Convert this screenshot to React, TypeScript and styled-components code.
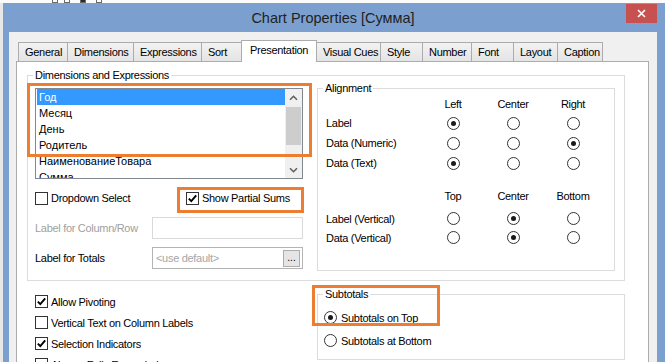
import styled, { createGlobalStyle, css } from 'styled-components';

const ORANGE = '#ed7d31';

const GlobalStyle = createGlobalStyle`
  html, body { margin: 0; padding: 0; }
  body {
    background: #e8e8e8;
    font-family: 'Liberation Sans', Arial, sans-serif;
    font-size: 11px;
    color: #000;
  }
  * { box-sizing: border-box; }
`;

const Screen = styled.div`
  width: 665px;
  height: 362px;
  overflow: hidden;
  position: relative;
  display: flex;
  flex-direction: column;
  background: #e8e8e8;
`;

const DesktopStrip = styled.div`
  height: 3px;
  flex: none;
  display: flex;
  background: #fbfbfb;
`;

const DesktopIcon = styled.span<{ $ml: number; $dark?: boolean }>`
  margin-left: ${p => p.$ml}px;
  width: 6px;
  height: 3px;
  border: 1px solid #6a6a6a;
  border-top: none;
  background: ${p => (p.$dark ? '#2a2a2a' : 'transparent')};
`;

const Window = styled.div`
  margin-left: 3px;
  width: 662px;
  flex: 1;
  display: flex;
  flex-direction: column;
  background: #7ba0cf;
  padding: 0 8px 0 6px;
`;

const TitleBar = styled.div`
  height: 29px;
  flex: none;
  display: grid;
  grid-template-columns: 1fr auto 1fr;
  align-items: center;
`;

const Title = styled.div`
  grid-column: 2;
  font-size: 14.5px;
  color: #1f1f1f;
  white-space: nowrap;
`;

const CloseButton = styled.div`
  grid-column: 3;
  justify-self: end;
  align-self: start;
  margin-top: 1px;
  width: 31px;
  height: 19px;
  background: #c75050;
  display: flex;
  align-items: center;
  justify-content: center;
`;

const Client = styled.div`
  flex: 1;
  display: flex;
  flex-direction: column;
  background: #f0f0f0;
  padding: 8px 8px 0 7px;
  letter-spacing: -0.3px;
`;

const TabStrip = styled.div`
  height: 21px;
  flex: none;
  display: flex;
  align-items: flex-end;
  padding-left: 2px;
`;

const Tab = styled.div<{ $w: number; $active?: boolean }>`
  width: ${p => p.$w}px;
  height: 19px;
  margin-left: -1px;
  border: 1px solid #acacac;
  border-bottom: none;
  background: linear-gradient(#f2f2f2, #e4e4e4);
  padding-left: 6px;
  line-height: 18px;
  white-space: nowrap;
  &:first-child { margin-left: 0; }
  ${p =>
    p.$active &&
    css`
      height: 22px;
      margin-bottom: -1px;
      background: #fff;
      position: relative;
      z-index: 1;
      padding-left: 8px;
      line-height: 19px;
    `}
`;

const Page = styled.div`
  flex: 1;
  background: #fff;
  border: 1px solid #acacac;
  padding: 6px 0 0 10px;
`;

const Group = styled.fieldset`
  margin: 0;
  min-width: 0;
  border: 1px solid #dcdcdc;
  padding: 0 0 0 7px;
`;

const Legend = styled.legend`
  padding: 0 2px;
  margin-left: -2px;
  line-height: 14px;
`;

const DimGroup = styled(Group)`
  width: 598px;
  padding: 0 9px 9px 7px;
`;

const DimBody = styled.div`
  display: grid;
  grid-template-columns: 268px 298px;
  column-gap: 14px;
  align-items: start;
`;

const LeftCol = styled.div`
  display: flex;
  flex-direction: column;
  padding-top: 6px;
`;

const ListBox = styled.div`
  height: 91px;
  border: 1px solid #828790;
  display: grid;
  grid-template-columns: 1fr 17px;
  overflow: hidden;
  letter-spacing: 0;
`;

const ListItems = styled.div`
  padding-left: 1px;
  overflow: hidden;
`;

const ListItem = styled.div<{ $selected?: boolean }>`
  height: 16px;
  line-height: 16px;
  padding-left: 2px;
  white-space: nowrap;
  background: ${p => (p.$selected ? '#3399ff' : 'transparent')};
  color: ${p => (p.$selected ? '#fff' : '#000')};
`;

const ScrollBar = styled.div`
  display: flex;
  flex-direction: column;
  background: #f0f0f0;
`;

const ScrollButton = styled.div`
  height: 17px;
  flex: none;
  display: flex;
  align-items: center;
  justify-content: center;
`;

const ScrollThumb = styled.div`
  height: 38px;
  margin: 1px 1px 0;
  background: #cdcdcd;
`;

const ScrollTrack = styled.div`
  flex: 1;
`;

const CheckRow = styled.div`
  margin-top: 11px;
  height: 16px;
  display: grid;
  grid-template-columns: 151px 1fr;
  align-items: center;
`;

const CheckLabel = styled.label`
  display: flex;
  align-items: center;
  gap: 3px;
  white-space: nowrap;
`;

const CheckBox = styled.span`
  width: 13px;
  height: 13px;
  flex: none;
  border: 1px solid #333;
  background: #fff;
  display: flex;
  align-items: center;
  justify-content: center;
`;

const FieldGrid = styled.div`
  margin-top: 11px;
  display: grid;
  grid-template-columns: 117px 151px;
  grid-auto-rows: 22px;
  row-gap: 8px;
  align-items: center;
`;

const FieldLabel = styled.span<{ $disabled?: boolean }>`
  color: ${p => (p.$disabled ? '#a0a0a0' : '#000')};
  white-space: nowrap;
`;

const TextBox = styled.div<{ $muted?: boolean }>`
  height: 22px;
  border: 1px solid ${p => (p.$muted ? '#d9d9d9' : '#b4b4b4')};
  background: #fff;
  display: flex;
  align-items: center;
  padding: 0 2px 0 3px;
  color: #a6a6a6;
  white-space: nowrap;
`;

const DotsButton = styled.div`
  margin-left: auto;
  width: 17px;
  height: 17px;
  border: 1px solid #acacac;
  background: #e5e5e5;
  color: #000;
  font-size: 10px;
  line-height: 13px;
  text-align: center;
  letter-spacing: 0;
`;

const AlignGroup = styled(Group)`
  margin-top: -1px;
  padding-bottom: 23px;
`;

const AlignBlock = styled.div<{ $head: number; $rows: number; $rh: number; $mt?: number }>`
  margin: ${p => p.$mt ?? 0}px 0 0 1px;
  display: grid;
  grid-template-columns: 97px repeat(3, 60px);
  grid-template-rows: ${p => p.$head}px repeat(${p => p.$rows}, ${p => p.$rh}px);
  align-items: center;
`;

const ColHead = styled.span`
  justify-self: center;
  align-self: start;
  line-height: 18px;
`;

const RowLabel = styled.span`
  white-space: nowrap;
`;

const Radio = styled.span<{ $on?: boolean }>`
  width: 13px;
  height: 13px;
  flex: none;
  border-radius: 50%;
  border: 1px solid #333;
  background: #fff;
  display: inline-flex;
  align-items: center;
  justify-content: center;
  justify-self: center;
  &::after {
    content: '';
    width: 5px;
    height: 5px;
    border-radius: 50%;
    background: #1a1a1a;
    display: ${p => (p.$on ? 'block' : 'none')};
  }
`;

const Lower = styled.div`
  display: grid;
  grid-template-columns: 290px 308px;
  align-items: start;
`;

const OptionList = styled.div`
  padding: 10px 0 0 8px;
  display: flex;
  flex-direction: column;
`;

const OptionRow = styled(CheckLabel)`
  height: 21px;
`;

const SubGroup = styled(Group)`
  margin-top: 6px;
  padding: 5px 0 7px 7px;
`;

const RadioRow = styled.label`
  height: 23px;
  margin-left: -1px;
  display: flex;
  align-items: center;
  gap: 4px;
  white-space: nowrap;
`;

const Highlight = styled.div<{ $x: number; $y: number; $w: number; $h: number }>`
  position: absolute;
  left: ${p => p.$x}px;
  top: ${p => p.$y}px;
  width: ${p => p.$w}px;
  height: ${p => p.$h}px;
  border: 3px solid ${ORANGE};
  pointer-events: none;
`;

const tabs: [string, number][] = [
  ['General', 50],
  ['Dimensions', 67],
  ['Expressions', 69],
  ['Sort', 41],
  ['Presentation', 76],
  ['Visual Cues', 65],
  ['Style', 43],
  ['Number', 50],
  ['Font', 43],
  ['Layout', 45],
  ['Caption', 46],
];

const listItems = ['Год', 'Месяц', 'День', 'Родитель', 'НаименованиеТовара', 'Сумма'];

const horizontal: [string, number][] = [
  ['Label', 0],
  ['Data (Numeric)', 2],
  ['Data (Text)', 0],
];

const vertical: [string, number][] = [
  ['Label (Vertical)', 1],
  ['Data (Vertical)', 1],
];

function Check({ on }: { on?: boolean }) {
  return (
    <CheckBox>
      {on && (
        <svg width="11" height="11" viewBox="0 0 11 11">
          <path d="M1.8 5.6 L4.3 8.2 L9.2 2.4" fill="none" stroke="#000" strokeWidth="1.9" />
        </svg>
      )}
    </CheckBox>
  );
}

function Chevron({ down }: { down?: boolean }) {
  return (
    <svg width="9" height="6" viewBox="0 0 9 6">
      <path
        d={down ? 'M1 1.2 L4.5 4.7 L8 1.2' : 'M1 4.8 L4.5 1.3 L8 4.8'}
        fill="none"
        stroke="#606060"
        strokeWidth="1.6"
      />
    </svg>
  );
}

function Block({
  heads,
  rows,
  head,
  rh,
  mt,
}: {
  heads: string[];
  rows: [string, number][];
  head: number;
  rh: number;
  mt?: number;
}) {
  return (
    <AlignBlock $head={head} $rows={rows.length} $rh={rh} $mt={mt}>
      <span />
      {heads.map(h => (
        <ColHead key={h}>{h}</ColHead>
      ))}
      {rows.map(([label, sel]) => [
        <RowLabel key={label}>{label}</RowLabel>,
        ...[0, 1, 2].map(i => <Radio key={label + i} $on={i === sel} />),
      ])}
    </AlignBlock>
  );
}

export default function App() {
  return (
    <>
      <GlobalStyle />
      <Screen>
        <DesktopStrip>
          <DesktopIcon $ml={52} />
          <DesktopIcon $ml={6} />
          <DesktopIcon $ml={10} $dark />
          <DesktopIcon $ml={10} />
        </DesktopStrip>
        <Window>
          <TitleBar>
            <Title>Chart Properties [Сумма]</Title>
            <CloseButton>
              <svg width="9" height="9" viewBox="0 0 9 9">
                <path d="M1 1 L8 8 M8 1 L1 8" stroke="#fff" strokeWidth="1.6" />
              </svg>
            </CloseButton>
          </TitleBar>
          <Client>
            <TabStrip>
              {tabs.map(([name, w]) => (
                <Tab key={name} $w={w} $active={name === 'Presentation'}>
                  {name}
                </Tab>
              ))}
            </TabStrip>
            <Page>
              <DimGroup>
                <Legend>Dimensions and Expressions</Legend>
                <DimBody>
                  <LeftCol>
                    <ListBox>
                      <ListItems>
                        {listItems.map((item, i) => (
                          <ListItem key={item} $selected={i === 0}>
                            {item}
                          </ListItem>
                        ))}
                      </ListItems>
                      <ScrollBar>
                        <ScrollButton>
                          <Chevron />
                        </ScrollButton>
                        <ScrollThumb />
                        <ScrollTrack />
                        <ScrollButton>
                          <Chevron down />
                        </ScrollButton>
                      </ScrollBar>
                    </ListBox>
                    <CheckRow>
                      <CheckLabel>
                        <Check />
                        Dropdown Select
                      </CheckLabel>
                      <CheckLabel>
                        <Check on />
                        Show Partial Sums
                      </CheckLabel>
                    </CheckRow>
                    <FieldGrid>
                      <FieldLabel $disabled>Label for Column/Row</FieldLabel>
                      <TextBox $muted />
                      <FieldLabel>Label for Totals</FieldLabel>
                      <TextBox>
                        {'<use default>'}
                        <DotsButton>...</DotsButton>
                      </TextBox>
                    </FieldGrid>
                  </LeftCol>
                  <AlignGroup>
                    <Legend>Alignment</Legend>
                    <Block heads={['Left', 'Center', 'Right']} rows={horizontal} head={18} rh={20} />
                    <Block heads={['Top', 'Center', 'Bottom']} rows={vertical} head={22} rh={19} mt={14} />
                  </AlignGroup>
                </DimBody>
              </DimGroup>
              <Lower>
                <OptionList>
                  <OptionRow>
                    <Check on />
                    Allow Pivoting
                  </OptionRow>
                  <OptionRow>
                    <Check />
                    Vertical Text on Column Labels
                  </OptionRow>
                  <OptionRow>
                    <Check on />
                    Selection Indicators
                  </OptionRow>
                  <OptionRow>
                    <Check />
                    Always Fully Expanded
                  </OptionRow>
                </OptionList>
                <SubGroup>
                  <Legend>Subtotals</Legend>
                  <RadioRow>
                    <Radio $on />
                    Subtotals on Top
                  </RadioRow>
                  <RadioRow>
                    <Radio />
                    Subtotals at Bottom
                  </RadioRow>
                </SubGroup>
              </Lower>
            </Page>
          </Client>
        </Window>
        <Highlight $x={27} $y={83} $w={285} $h={74} />
        <Highlight $x={177} $y={187} $w={127} $h={26} />
        <Highlight $x={312} $y={285} $w={128} $h={41} />
      </Screen>
    </>
  );
}
